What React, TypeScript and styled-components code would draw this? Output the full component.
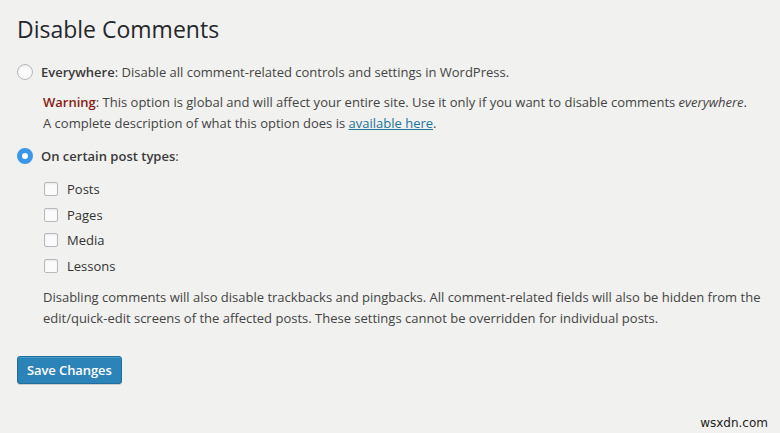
import styled, { createGlobalStyle } from 'styled-components';

const GlobalStyle = createGlobalStyle`
  html, body {
    margin: 0;
    padding: 0;
    background: #f1f1ef;
  }
  body {
    font-family: 'Open Sans', 'Noto Sans', sans-serif;
    color: #444;
    font-size: 13px;
  }
`;

const postTypes = ['Posts', 'Pages', 'Media', 'Lessons'];

export default function App() {
  return (
    <Page>
      <GlobalStyle />
      <Title>Disable Comments</Title>
      <Option>
        <Radio />
        <OptionLabel>
          <strong>Everywhere</strong>: Disable all comment-related controls and settings in WordPress.
        </OptionLabel>
      </Option>
      <Indented $top={11} $bottom={13}>
        <Warning>Warning</Warning>: This option is global and will affect your entire site. Use it only if
        you want to disable comments <em>everywhere</em>.
        <br />
        A complete description of what this option does is <Link href='#'>available here</Link>.
      </Indented>
      <Option>
        <Radio checked />
        <OptionLabel>
          <strong>On certain post types</strong>:
        </OptionLabel>
      </Option>
      <CheckList>
        {postTypes.map((type) => (
          <CheckRow key={type}>
            <Checkbox />
            <span>{type}</span>
          </CheckRow>
        ))}
      </CheckList>
      <Indented $top={12} $bottom={0}>
        Disabling comments will also disable trackbacks and pingbacks. All comment-related fields will also be
        hidden from the edit/quick-edit screens of the affected posts. These settings cannot be overridden for
        individual posts.
      </Indented>
      <SaveButton>Save Changes</SaveButton>
      <Watermark>wsxdn.com</Watermark>
    </Page>
  );
}

const Page = styled.div`
  position: relative;
  width: 780px;
  height: 433px;
  box-sizing: border-box;
  padding: 14px 0 0 17px;
  overflow: hidden;
`;

const Title = styled.h1`
  margin: 0 0 19px;
  font-size: 23px;
  font-weight: 400;
  color: #23282d;
  line-height: 30px;
`;

const Option = styled.div`
  display: flex;
  align-items: center;
  gap: 8px;
  height: 18px;
`;

const Radio = styled.span<{ checked?: boolean }>`
  width: 16px;
  height: 16px;
  box-sizing: border-box;
  border-radius: 50%;
  flex-shrink: 0;
  background: ${(p) => (p.checked ? '#fff' : '#fbfbfb')};
  border: ${(p) => (p.checked ? '5px solid #3d97e8' : '1px solid #b4b9be')};
  box-shadow: inset 0 1px 2px rgba(0, 0, 0, 0.08);
`;

const OptionLabel = styled.span`
  color: #444;
  strong {
    font-weight: 600;
    color: #3a3a3a;
  }
`;

const Indented = styled.p<{ $top: number; $bottom: number }>`
  margin: ${(p) => `${p.$top}px 0 ${p.$bottom}px 26px`};
  line-height: 21px;
  color: #444;
  em {
    font-style: italic;
  }
`;

const Warning = styled.strong`
  color: #8a1b13;
  font-weight: 600;
`;

const Link = styled.a`
  color: #21759b;
  text-decoration: underline;
`;

const CheckList = styled.div`
  display: flex;
  flex-direction: column;
  gap: 7.7px;
  margin: 15px 0 0 27px;
`;

const CheckRow = styled.div`
  display: flex;
  align-items: center;
  gap: 9px;
  height: 18px;
  color: #333;
`;

const Checkbox = styled.span`
  width: 14px;
  height: 14px;
  box-sizing: border-box;
  border: 1px solid #b4b9be;
  border-radius: 2px;
  background: #fbfbfb;
  box-shadow: inset 0 1px 2px rgba(0, 0, 0, 0.08);
`;

const SaveButton = styled.button`
  display: block;
  margin-top: 27px;
  height: 28px;
  padding: 0 9px;
  background: #2b83b7;
  border: 1px solid #1f6e9c;
  border-radius: 3px;
  color: #fff;
  font-family: 'Open Sans', 'Noto Sans', sans-serif;
  font-size: 13px;
  font-weight: 600;
  letter-spacing: -0.1px;
  box-shadow: inset 0 1px 0 rgba(120, 200, 230, 0.4), 0 1px 0 rgba(0, 0, 0, 0.15);
`;

const Watermark = styled.span`
  position: absolute;
  right: 12px;
  bottom: 3px;
  font-family: 'DejaVu Sans', sans-serif;
  font-size: 12px;
  color: #222;
`;
